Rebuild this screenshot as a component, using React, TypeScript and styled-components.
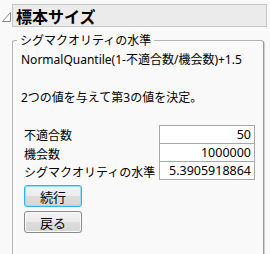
import React from "react";
import styled, { createGlobalStyle } from "styled-components";

const Global = createGlobalStyle`
  html, body { margin: 0; padding: 0; background: #f9f9f9; }
  body {
    font-family: "Noto Sans CJK JP", "Noto Sans", sans-serif;
    color: #111;
    width: 270px;
    height: 254px;
    overflow: hidden;
  }
`;

const Page = styled.div`
  padding: 4px 3px 0 2px;
`;

const HeaderRow = styled.div`
  display: flex;
  align-items: flex-start;
  gap: 1px;
`;

const Disclosure = styled.svg`
  width: 9px;
  height: 23px;
  flex: none;
`;

const HeaderBar = styled.div`
  flex: 1;
  height: 21px;
  border: 1px solid #c6c6c6;
  background: #ebebeb;
  display: flex;
  align-items: center;
  padding-left: 3px;
  font-size: 16px;
  font-weight: 700;
  color: #000;
`;

const Group = styled.fieldset`
  margin: 5px 3px 0 10px;
  padding: 0 8px 0 8px;
  border: 1px solid #b4b4b4;
  border-right-color: #9a9a9a;
  border-bottom-color: #9a9a9a;
  border-radius: 3px;
  min-width: 0;
  height: 226px;
  box-sizing: border-box;
  box-shadow: 1px 1px 0 #d0d0d0;
`;

const Legend = styled.legend`
  padding: 0 3px;
  margin-left: -4px;
  font-size: 12px;
  line-height: 16px;
  color: #000;
`;

const Para = styled.div<{ $top: number }>`
  margin-top: ${(p) => p.$top}px;
  font-family: "Noto Sans", "Noto Sans CJK JP", sans-serif;
  font-size: 12px;
  line-height: 16px;
  color: #000;
  white-space: nowrap;
`;

const Table = styled.div`
  margin-top: 19px;
  margin-left: 3px;
  display: grid;
  grid-template-columns: 135px 96px;
`;

const Label = styled.div`
  height: 18px;
  display: flex;
  align-items: center;
  font-size: 12px;
  color: #000;
  white-space: nowrap;
`;

const Value = styled.div<{ $first?: boolean }>`
  box-sizing: border-box;
  border: 1px solid #a8a8a8;
  border-top-width: ${(p) => (p.$first ? 1 : 0)}px;
  height: ${(p) => (p.$first ? 19 : 18)}px;
  background: #fff;
  display: flex;
  align-items: center;
  justify-content: flex-end;
  padding-right: 3px;
  font-family: "Noto Sans", sans-serif;
  font-size: 12.5px;
  color: #000;
`;

const Buttons = styled.div`
  margin-top: 5px;
  margin-left: 3px;
  display: flex;
  flex-direction: column;
  gap: 4px;
  align-items: flex-start;
`;

const Button = styled.button<{ $focus?: boolean }>`
  width: 58px;
  height: 22px;
  box-sizing: border-box;
  border: 1px solid ${(p) => (p.$focus ? "#2fb6e6" : "#8a8a8a")};
  border-radius: 3px;
  background: linear-gradient(#f3f3f3 0%, #ebebeb 50%, #dddddd 51%, #d6d6d6 100%);
  box-shadow: ${(p) => (p.$focus ? "inset 0 0 0 1px #8fe0f8" : "inset 0 0 0 1px #fafafa")};
  font-family: "Noto Sans CJK JP", sans-serif;
  font-size: 13px;
  color: #000;
  padding: 0;
  display: flex;
  align-items: center;
  justify-content: center;
`;

export default function App() {
  return (
    <>
      <Global />
      <Page>
        <HeaderRow>
          <Disclosure viewBox="0 0 9 23">
            <path d="M8.5 8.5 L8.5 17.5 L0.5 17.5 Z" fill="#fff" stroke="#8a8a8a" strokeWidth="1" />
          </Disclosure>
          <HeaderBar>標本サイズ</HeaderBar>
        </HeaderRow>
        <Group>
          <Legend>シグマクオリティの水準</Legend>
          <Para $top={4}>NormalQuantile(1-不適合数/機会数)+1.5</Para>
          <Para $top={22}>2つの値を与えて第3の値を決定。</Para>
          <Table>
            <Label>不適合数</Label>
            <Value $first>50</Value>
            <Label>機会数</Label>
            <Value>1000000</Value>
            <Label>シグマクオリティの水準</Label>
            <Value>5.3905918864</Value>
          </Table>
          <Buttons>
            <Button $focus>続行</Button>
            <Button>戻る</Button>
          </Buttons>
        </Group>
      </Page>
    </>
  );
}
